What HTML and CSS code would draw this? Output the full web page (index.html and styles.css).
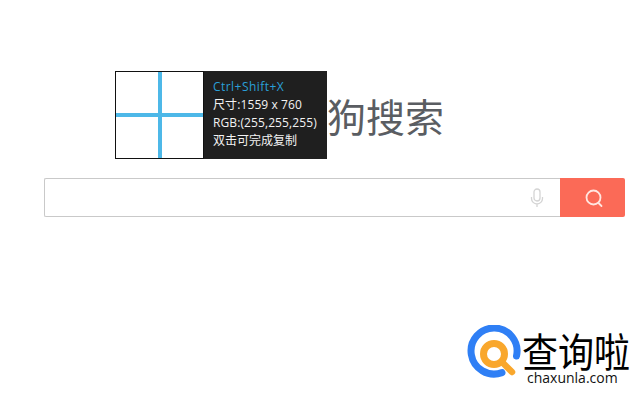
FILE: index.html
```html
<!DOCTYPE html>
<html lang="zh">
<head>
  <meta charset="UTF-8" />
  <title>搜狗搜索</title>
  <link rel="stylesheet" href="styles.css">
</head>
<body>
  <main class="search-page">
    <h1 class="brand">搜狗搜索</h1>
    <form class="search-form">
      <div class="search-box">
        <svg class="mic" width="14" height="20" viewBox="0 0 14 20" fill="none" stroke="#d4d4d4" stroke-width="1.3">
          <rect x="4" y="1" width="6" height="12" rx="3" />
          <path d="M1.5 9v1.5a5.500 5.500 0 0 0 11 0V9M7 16v3" />
        </svg>
      </div>
      <button class="search-btn" type="button" aria-label="搜索">
        <svg width="20" height="20" viewBox="0 0 20 20" fill="none" stroke="#ffe6e0" stroke-width="1.8" stroke-linecap="round">
          <circle cx="9.500" cy="9.500" r="7" />
          <path d="M14.500 15l3 3" />
        </svg>
      </button>
    </form>
  </main>

  <!-- picker tooltip, lies over the title -->
  <div class="picker">
    <div class="picker-zoom">
      <span class="cross-v"></span>
      <span class="cross-h"></span>
    </div>
    <div class="picker-info">
      <p class="picker-keys">Ctrl+Shift+X</p>
      <p>尺寸:1559 x 760</p>
      <p>RGB:(255,255,255)</p>
      <p class="picker-hint">双击可完成复制</p>
    </div>
  </div>

  <!-- watermark -->
  <div class="watermark">
    <svg class="watermark-icon" width="55" height="56" viewBox="0 0 55 56" fill="none" stroke-linecap="round">
      <path d="M49.500 31A23 23 0 1 0 35 47.600" stroke="#2f7ff5" stroke-width="7" />
      <circle cx="27" cy="29" r="10.500" stroke="#f9a72c" stroke-width="7" />
      <path d="M35 37l10 10" stroke="#f9a72c" stroke-width="6.500" />
    </svg>
    <div class="watermark-text">
      <span class="watermark-name">查询啦</span>
      <span class="watermark-url">chaxunla.com</span>
    </div>
  </div>
</body>
</html>
```

FILE: styles.css
```css
* {
  margin: 0;
  padding: 0;
  box-sizing: border-box;
}

html, body {
  height: 100%;
}

body {
  position: relative;
  overflow: hidden;
  background: #fff;
  color: #333;
  font-family: "Open Sans", "Noto Sans CJK SC", sans-serif;
}

.search-page {
  display: flex;
  flex-direction: column;
  padding: 91px 16px 0 44px;
}

.brand {
  padding-left: 244px;
  font-size: 39px;
  font-weight: 400;
  line-height: 48px;
  color: #5a5d62;
  font-family: "Noto Sans CJK SC", sans-serif;
}

.search-form {
  display: flex;
  height: 39px;
  margin-top: 39px;
}

.search-box {
  flex: 1;
  display: flex;
  align-items: center;
  justify-content: flex-end;
  padding-right: 16px;
  border: 1px solid #c9c9c9;
  border-right: none;
  border-radius: 2px 0 0 2px;
}

.search-btn {
  display: flex;
  align-items: center;
  justify-content: center;
  width: 65px;
  padding-left: 3px;
  border: none;
  border-radius: 0 2px 2px 0;
  background: #fb6a57;
}

.picker {
  position: absolute;
  left: 115px;
  top: 71px;
  display: flex;
  width: 212px;
  height: 88px;
  background: #1f1f1f;
}

.picker-zoom {
  position: relative;
  width: 89px;
  height: 88px;
  border: 1px solid #111;
  background: #fff;
}

.cross-v {
  position: absolute;
  left: 42px;
  top: 0;
  width: 4px;
  height: 100%;
  background: #4db8e8;
}

.cross-h {
  position: absolute;
  left: 0;
  top: 41px;
  width: 100%;
  height: 4px;
  background: #4db8e8;
}

.picker-info {
  padding: 7px 0 0 9px;
  font-size: 12px;
  line-height: 18px;
  letter-spacing: .1px;
  color: #f2f2f2;
  white-space: nowrap;
}

.picker-keys {
  letter-spacing: .45px;
  color: #2a9fd8;
}

.picker-hint {
  letter-spacing: 0;
}

.watermark {
  position: absolute;
  left: 467px;
  top: 325px;
  display: flex;
}

.watermark-text {
  display: flex;
  flex-direction: column;
  align-items: flex-start;
}

.watermark-name {
  margin-top: 4px;
  font-size: 36px;
  line-height: 40px;
  color: #000;
  font-family: "Noto Sans CJK SC", sans-serif;
  white-space: nowrap;
  transform: scaleY(1.1);
}

.watermark-url {
  margin-top: 2px;
  padding-left: 5px;
  font-size: 14px;
  line-height: 14px;
  color: #111;
  font-family: "Open Sans", sans-serif;
}
```
